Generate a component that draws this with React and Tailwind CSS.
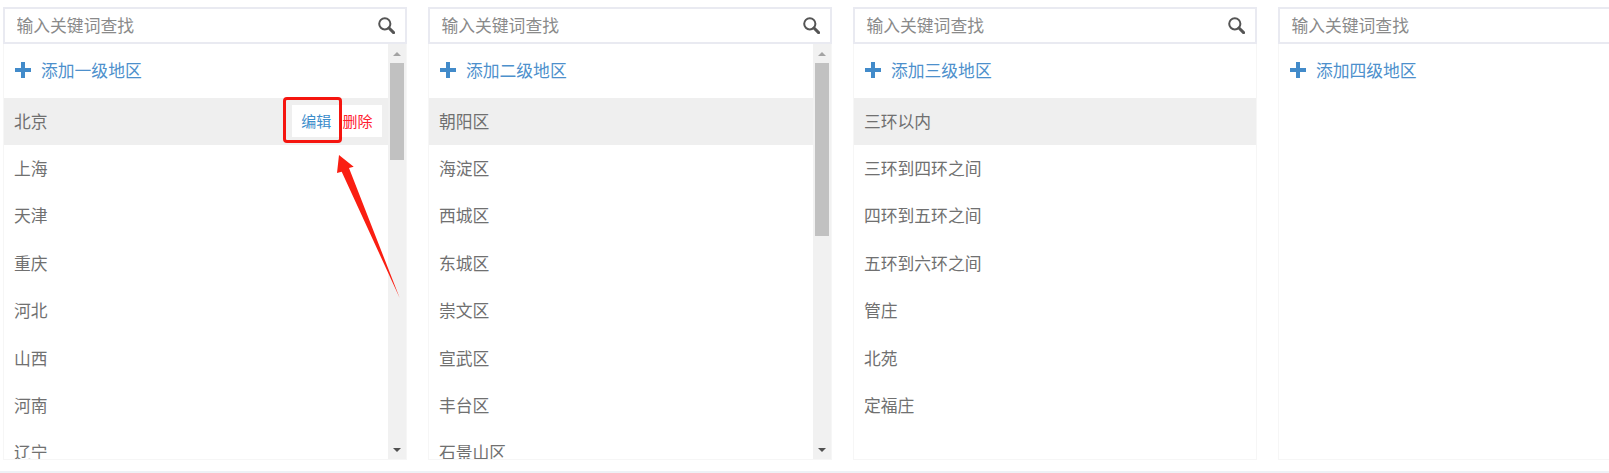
import React from 'react';

const columns = [
    {
        addLabel: '添加一级地区',
        items: ['北京', '上海', '天津', '重庆', '河北', '山西', '河南', '辽宁'],
        thumbClass: 'h-[97px]',
        showActions: true,
    },
    {
        addLabel: '添加二级地区',
        items: ['朝阳区', '海淀区', '西城区', '东城区', '崇文区', '宣武区', '丰台区', '石景山区'],
        thumbClass: 'h-[173px]',
    },
    {
        addLabel: '添加三级地区',
        items: ['三环以内', '三环到四环之间', '四环到五环之间', '五环到六环之间', '管庄', '北苑', '定福庄'],
    },
    {
        addLabel: '添加四级地区',
        items: [],
    },
];

const SearchIcon = () => (
    <svg viewBox="0 0 17 17" className="w-[17px] h-[17px] shrink-0 text-[#555]" fill="none" stroke="currentColor">
        <circle cx="6.8" cy="6.8" r="5.6" strokeWidth="2" />
        <path d="M11 11 L15.6 15.6" strokeWidth="3" strokeLinecap="round" />
    </svg>
);

const PlusIcon = () => (
    <svg viewBox="0 0 16 16" className="w-4 h-4 shrink-0 text-[#428bca]" fill="currentColor">
        <path d="M6 0h4v6h6v4h-6v6H6v-6H0V6h6z" />
    </svg>
);

const Scrollbar = ({ thumbClass }) => (
    <div className="w-[18px] shrink-0 bg-[#f1f1f1] flex flex-col items-center">
        <div className="h-[19px] w-full flex items-center justify-center">
            <div className="w-0 h-0 border-x-4 border-x-transparent border-b-4 border-b-[#a3a3a3]" />
        </div>
        <div className={`w-[14px] bg-[#c1c1c1] ${thumbClass}`} />
        <div className="flex-1" />
        <div className="h-[19px] w-full flex items-center justify-center">
            <div className="w-0 h-0 border-x-4 border-x-transparent border-t-4 border-t-[#505050]" />
        </div>
    </div>
);

const RegionColumn = ({ addLabel, items, thumbClass, showActions }) => (
    <div className="w-[404.4px] shrink-0 flex flex-col">
        <div className="h-[37px] shrink-0 border-2 border-[#e9eaf1] bg-white flex items-center pl-[11.5px] pr-[10px]">
            <input
                placeholder="输入关键词查找"
                className="flex-1 min-w-0 bg-transparent outline-none text-[16.8px] placeholder:text-[#8a8a8a]"
            />
            <SearchIcon />
        </div>
        <div className="h-[416px] shrink-0 flex border border-t-0 border-[#f6f6f6] overflow-hidden">
            <div className="flex-1 min-w-0 overflow-hidden">
                <div className="h-[53.5px] pb-[1px] flex items-center gap-[10px] pl-[11px] text-[16.8px] text-[#4d90cc]">
                    <PlusIcon />
                    <span>{addLabel}</span>
                </div>
                {items.map((item, i) => (
                    <div
                        key={item}
                        className={`h-[47.4px] flex items-center justify-between pl-[10px] pr-[6px] text-[16.8px] text-[#707070] ${
                            i === 0 ? 'bg-[#efefef]' : ''
                        }`}
                    >
                        <span>{item}</span>
                        {i === 0 && showActions && (
                            <div className="w-[90px] h-[32px] bg-white flex items-center justify-end gap-[11px] pr-[10px] text-[15px]">
                                <span className="text-[#3c8dcb]">编辑</span>
                                <span className="text-[#ff2030]">删除</span>
                            </div>
                        )}
                    </div>
                ))}
            </div>
            {thumbClass && <Scrollbar thumbClass={thumbClass} />}
        </div>
    </div>
);

export default function App() {
    return (
        <div
            className="relative h-[473px] overflow-hidden bg-white flex flex-col"
            style={{ fontFamily: '"Noto Sans CJK SC", "Liberation Sans", sans-serif' }}
        >
            <div className="flex-1 min-h-0 flex gap-[20.6px] pl-[3px] pt-[7px]">
                {columns.map((col) => (
                    <RegionColumn key={col.addLabel} {...col} />
                ))}
            </div>
            <div className="h-[2px] shrink-0 bg-[#eef1f5]" />

            {/* annotation drawn over the screenshot */}
            <div className="absolute left-[283px] top-[97px] w-[59px] h-[46px] border-[3px] border-[#f5150f] rounded-[4px]" />
            <svg className="absolute left-[330px] top-[150px]" width="75" height="155" viewBox="0 0 75 155">
                <path d="M9 5 L23.7 16.7 L19 18 L69.7 148 L11.7 21.7 L7 23 Z" fill="#fa1e12" />
            </svg>
        </div>
    );
}
